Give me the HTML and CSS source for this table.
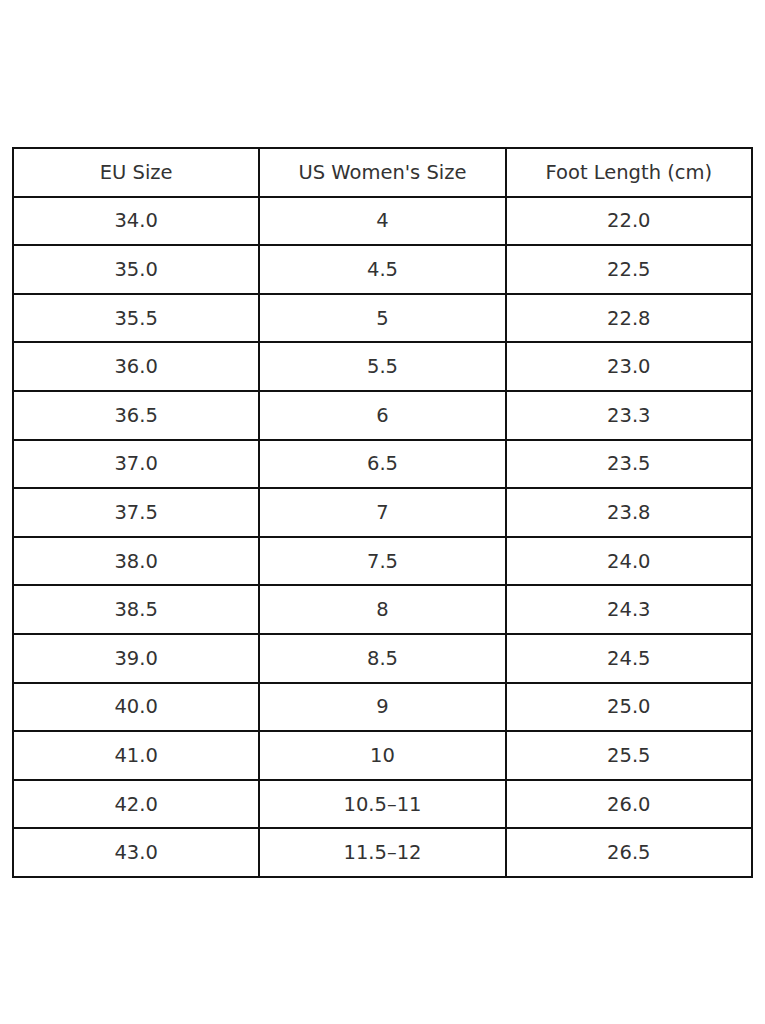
FILE: index.html
```html
<!DOCTYPE html>
<html>
<head>
<meta charset="utf-8">
<link rel="stylesheet" href="styles.css">
</head>
<body>
<div class="page">
<table class="sizes">
<thead>
<tr><th>EU Size</th><th>US Women's Size</th><th>Foot Length (cm)</th></tr>
</thead>
<tbody>
<tr><td>34.0</td><td>4</td><td>22.0</td></tr>
<tr><td>35.0</td><td>4.5</td><td>22.5</td></tr>
<tr><td>35.5</td><td>5</td><td>22.8</td></tr>
<tr><td>36.0</td><td>5.5</td><td>23.0</td></tr>
<tr><td>36.5</td><td>6</td><td>23.3</td></tr>
<tr><td>37.0</td><td>6.5</td><td>23.5</td></tr>
<tr><td>37.5</td><td>7</td><td>23.8</td></tr>
<tr><td>38.0</td><td>7.5</td><td>24.0</td></tr>
<tr><td>38.5</td><td>8</td><td>24.3</td></tr>
<tr><td>39.0</td><td>8.5</td><td>24.5</td></tr>
<tr><td>40.0</td><td>9</td><td>25.0</td></tr>
<tr><td>41.0</td><td>10</td><td>25.5</td></tr>
<tr><td>42.0</td><td>10.5–11</td><td>26.0</td></tr>
<tr><td>43.0</td><td>11.5–12</td><td>26.5</td></tr>
</tbody>
</table>
</div>
</body>
</html>
```
FILE: styles.css
```css
html, body {
  margin: 0;
  padding: 0;
  background: #ffffff;
}
.page {
  padding: 147px 0 0 12px;
}
.sizes {
  border-collapse: collapse;
  table-layout: fixed;
  width: 741px;
  font-family: "DejaVu Sans", sans-serif;
  font-size: 19.5px;
  color: #333333;
}
.sizes tr {
  height: 48.6px;
}
.sizes th,
.sizes td {
  border: 2px solid #111111;
  padding: 0;
  text-align: center;
  vertical-align: middle;
  font-weight: normal;
}
```
